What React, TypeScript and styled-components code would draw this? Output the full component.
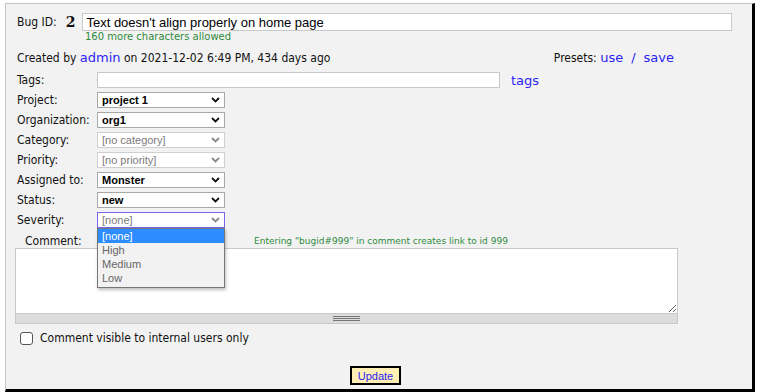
import React from "react";
import styled, { createGlobalStyle } from "styled-components";

const Global = createGlobalStyle`
  html, body { margin: 0; padding: 0; background: #ffffff; }
  body { font-family: Tahoma, "DejaVu Sans Condensed", "DejaVu Sans", sans-serif; font-size: 12px; color: #111; }
`;

const Panel = styled.div`
  margin: 3px 8px 0 5px;
  height: 389px;
  box-sizing: border-box;
  background: #f2f2f2;
  border-top: 1px solid #c4c4c4;
  border-left: 1px solid #c4c4c4;
  border-right: 3px solid #000;
  border-bottom: 3px solid #000;
  padding: 9px 0 0 11px;
  overflow: hidden;
`;

const BugRow = styled.div`
  display: flex;
  align-items: center;
  height: 18px;
`;

const Label = styled.span`
  font-size: 12px;
  color: #111;
`;

const BugNum = styled.span`
  font-family: "DejaVu Serif", "Liberation Serif", serif;
  font-weight: bold;
  font-size: 14px;
  margin: 0 7px 0 9px;
`;

const TextInput = styled.input<{ $w: number; $h?: number }>`
  width: ${(p) => p.$w}px;
  box-sizing: border-box;
  height: ${(p) => p.$h ?? 18}px;
  border: 1px solid #c8c8c8;
  background: #fff;
  font-family: "Liberation Sans", Arial, sans-serif;
  font-size: 13px;
  padding: 0 3px;
  outline: none;
  color: #000;
`;

const Hint = styled.div<{ $indent?: number; $size?: number }>`
  font-family: "DejaVu Sans", Verdana, sans-serif;
  font-size: ${(p) => p.$size ?? 9}px;
  color: #2f8a3c;
  padding-left: ${(p) => p.$indent ?? 0}px;
  line-height: 12px;
`;

const CreatedRow = styled.div`
  display: flex;
  align-items: center;
  justify-content: space-between;
  height: 18px;
  margin-top: 5px;
  padding-right: 78px;
`;

const Link = styled.a<{ $size?: number }>`
  font-family: "DejaVu Sans", Verdana, sans-serif;
  font-size: ${(p) => p.$size ?? 13}px;
  color: #2c1ef2;
  text-decoration: none;
`;

const Slash = styled.span`
  color: #2c1ef2;
  font-family: "DejaVu Sans", Verdana, sans-serif;
  font-size: 13px;
  margin: 0 8px;
`;

const FieldRow = styled.div<{ $mt?: number }>`
  display: grid;
  grid-template-columns: 80px auto auto;
  align-items: center;
  justify-content: start;
  height: 16px;
  margin-top: ${(p) => p.$mt ?? 4}px;
`;

const TagsLink = styled(Link)`
  margin-left: 11px;
`;

const SelectBox = styled.div<{ $disabled?: boolean; $focus?: boolean }>`
  width: 128px;
  height: 16px;
  box-sizing: border-box;
  background: #fff;
  border: 1px solid ${(p) => (p.$focus ? "#7867ee" : p.$disabled ? "#cfcfcf" : "#a8a8a8")};
  display: flex;
  align-items: center;
  justify-content: space-between;
  padding: 0 4px 0 4px;
  font-family: "Liberation Sans", Arial, sans-serif;
  font-size: 11px;
  font-weight: ${(p) => (p.$disabled ? "normal" : "bold")};
  color: ${(p) => (p.$disabled ? "#7a7a7a" : "#000")};
  position: relative;
`;

const Chevron = ({ color }: { color: string }) => (
  <svg width="9" height="6" viewBox="0 0 9 6">
    <polyline points="1,1 4.5,4.5 8,1" fill="none" stroke={color} strokeWidth="1.8" />
  </svg>
);

const DropList = styled.div`
  position: absolute;
  left: -1px;
  top: 15px;
  width: 128px;
  box-sizing: border-box;
  background: #f2f2f2;
  border: 1px solid #777;
  box-shadow: 1px 2px 3px rgba(0, 0, 0, 0.25);
  z-index: 5;
  padding-bottom: 2px;
`;

const DropItem = styled.div<{ $sel?: boolean }>`
  height: 14px;
  line-height: 14px;
  padding-left: 4px;
  font-family: "Liberation Sans", Arial, sans-serif;
  font-size: 11px;
  font-weight: normal;
  background: ${(p) => (p.$sel ? "#2d8cff" : "transparent")};
  color: ${(p) => (p.$sel ? "#fff" : "#666")};
`;

const CommentHead = styled.div`
  display: grid;
  grid-template-columns: 239px auto;
  align-items: center;
  height: 14px;
  margin-top: 6px;
  margin-left: -2px;
`;

const CommentLabel = styled.span`
  padding-left: 10px;
  font-size: 12px;
`;

const TextAreaWrap = styled.div`
  margin-left: -2px;
  width: 663px;
`;

const TextArea = styled.textarea`
  display: block;
  width: 663px;
  height: 66px;
  box-sizing: border-box;
  border: 1px solid #c8c8c8;
  background: #fff;
  resize: vertical;
  margin: 0;
  outline: none;
`;

const Grip = styled.div`
  height: 10px;
  box-sizing: border-box;
  background: #dcdcdc;
  border: 1px solid #c8c8c8;
  border-top: none;
  display: flex;
  align-items: center;
  justify-content: center;
`;

const GripLines = styled.div`
  width: 27px;
  height: 5px;
  border-top: 1px solid #777;
  border-bottom: 1px solid #777;
  box-sizing: border-box;
  position: relative;
  &::after {
    content: "";
    position: absolute;
    left: 0;
    right: 0;
    top: 1px;
    border-top: 1px solid #777;
  }
`;

const CheckRow = styled.label`
  display: flex;
  align-items: center;
  gap: 7px;
  margin-top: 6px;
  margin-left: 3px;
  height: 16px;
  font-size: 12px;
`;

const Check = styled.span`
  width: 13px;
  height: 13px;
  box-sizing: border-box;
  border: 1px solid #555;
  border-radius: 3px;
  background: #fff;
`;

const ButtonRow = styled.div`
  display: flex;
  justify-content: center;
  margin-top: 20px;
  padding-right: 18px;
`;

const UpdateButton = styled.button`
  height: 19px;
  width: 51px;
  box-sizing: border-box;
  background: #ffefb5;
  border: 2px solid #000;
  color: #2c1ef2;
  font-family: "Liberation Sans", Arial, sans-serif;
  font-size: 11px;
  padding: 0;
`;

const rows: { label: string; value: string; disabled?: boolean }[] = [
  { label: "Project:", value: "project 1" },
  { label: "Organization:", value: "org1" },
  { label: "Category:", value: "[no category]", disabled: true },
  { label: "Priority:", value: "[no priority]", disabled: true },
  { label: "Assigned to:", value: "Monster" },
  { label: "Status:", value: "new" },
];

export default function App() {
  return (
    <>
      <Global />
      <Panel>
        <BugRow>
          <Label>Bug ID:</Label>
          <BugNum>2</BugNum>
          <TextInput $w={650} defaultValue="Text doesn't align properly on home page" />
        </BugRow>
        <Hint $indent={68} $size={10}>160 more characters allowed</Hint>
        <CreatedRow>
          <span>
            Created by <Link href="#">admin</Link> on 2021-12-02 6:49 PM, 434 days ago
          </span>
          <span>
            Presets: <Link href="#">use</Link>
            <Slash>/</Slash>
            <Link href="#">save</Link>
          </span>
        </CreatedRow>
        <FieldRow $mt={6}>
          <Label>Tags:</Label>
          <TextInput $w={403} $h={16} />
          <TagsLink href="#">tags</TagsLink>
        </FieldRow>
        {rows.map((r) => (
          <FieldRow key={r.label}>
            <Label>{r.label}</Label>
            <SelectBox $disabled={r.disabled}>
              <span>{r.value}</span>
              <Chevron color={r.disabled ? "#8a8a8a" : "#111"} />
            </SelectBox>
          </FieldRow>
        ))}
        <FieldRow>
          <Label>Severity:</Label>
          <SelectBox $disabled $focus>
            <span>[none]</span>
            <Chevron color="#8a8a8a" />
            <DropList>
              <DropItem $sel>[none]</DropItem>
              <DropItem>High</DropItem>
              <DropItem>Medium</DropItem>
              <DropItem>Low</DropItem>
            </DropList>
          </SelectBox>
        </FieldRow>
        <CommentHead>
          <CommentLabel>Comment:</CommentLabel>
          <Hint>Entering "bugid#999" in comment creates link to id 999</Hint>
        </CommentHead>
        <TextAreaWrap>
          <TextArea />
          <Grip>
            <GripLines />
          </Grip>
        </TextAreaWrap>
        <CheckRow>
          <Check />
          Comment visible to internal users only
        </CheckRow>
        <ButtonRow>
          <UpdateButton>Update</UpdateButton>
        </ButtonRow>
      </Panel>
    </>
  );
}
